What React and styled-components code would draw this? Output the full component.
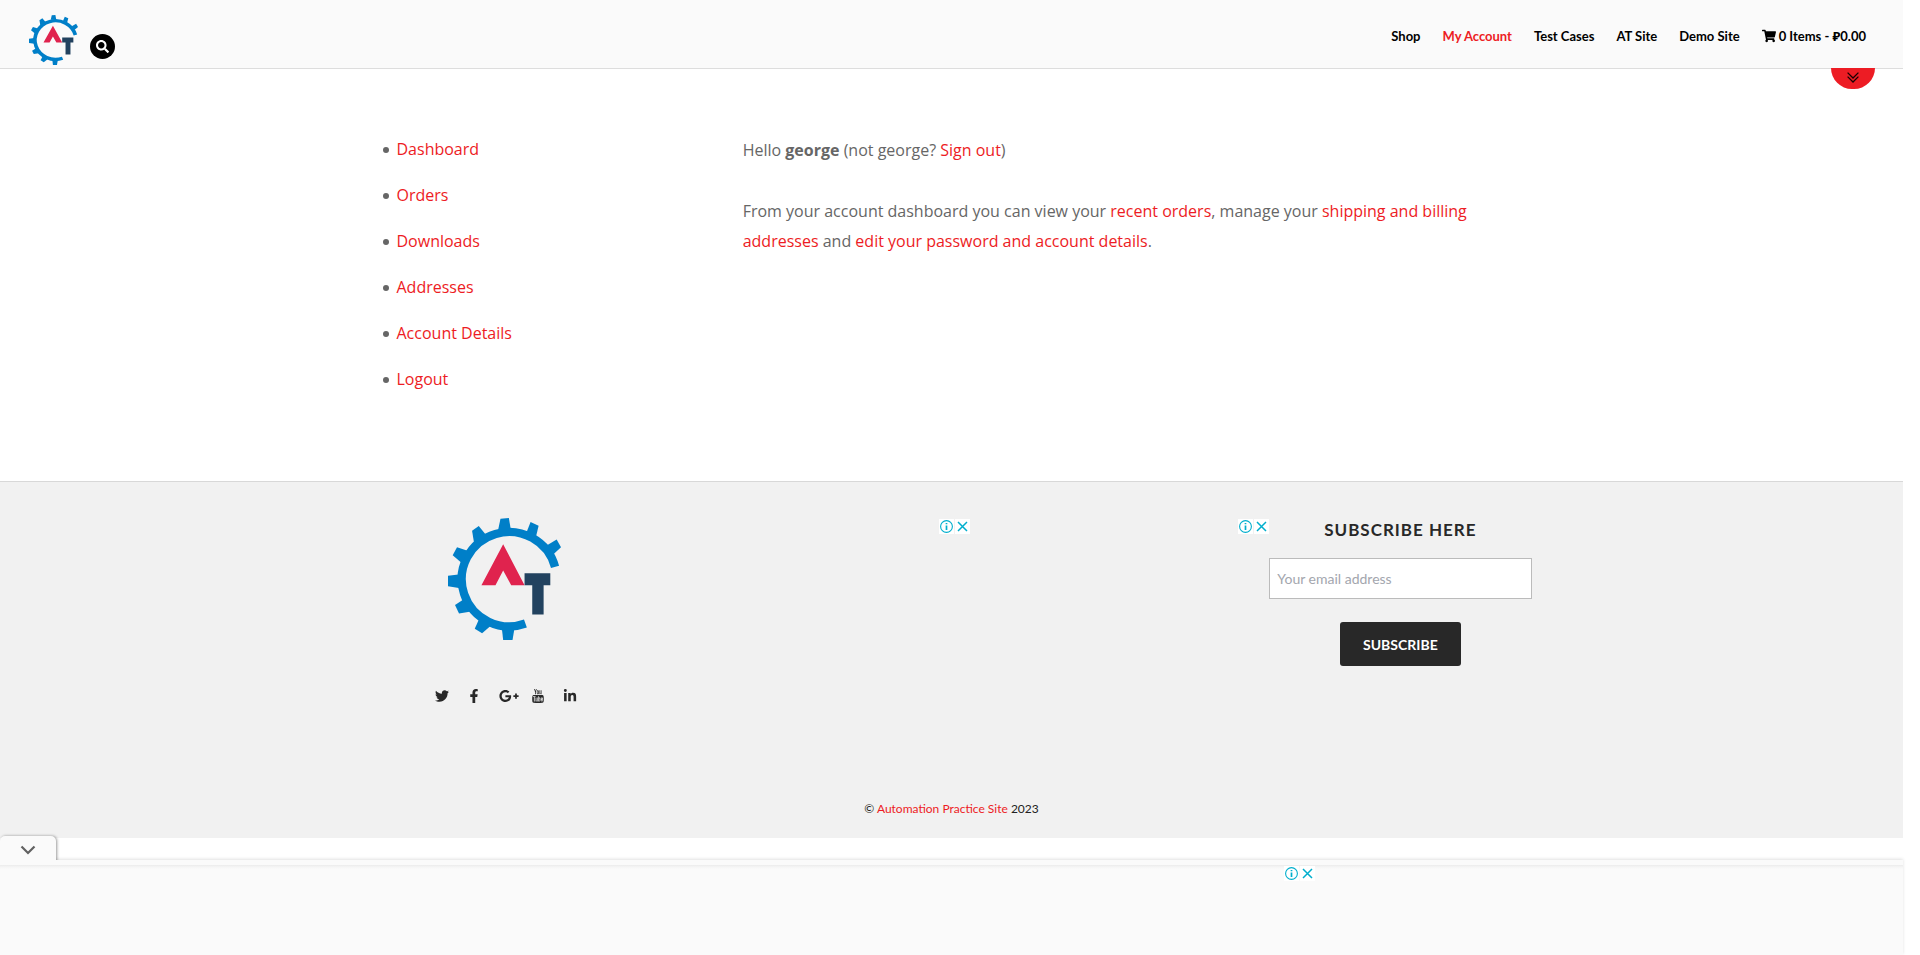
import React from "react";
import styled, { createGlobalStyle } from "styled-components";
import { FaSearch, FaShoppingCart, FaTwitter, FaFacebookF, FaGooglePlusG, FaLinkedinIn } from "react-icons/fa";
import { TfiYoutube } from "react-icons/tfi";

const RED = "#ed1c24";
const INK = "#282828";
const UI_FONT = 'Lato, "Noto Sans", sans-serif';
const BODY_FONT = '"Open Sans", "Noto Sans", sans-serif';

const GlobalStyle = createGlobalStyle`
  *, *::before, *::after { box-sizing: border-box; }
  body { margin: 0; background: #fff; color: #666; font: 16px/30px ${BODY_FONT}; }
  a { color: ${RED}; text-decoration: none; }
  p, ul, h4 { margin: 0; padding: 0; }
`;

const Page = styled.div`
  display: flex;
  flex-direction: column;
  min-height: 100vh;
  padding-right: 17px;
`;

const Header = styled.header`
  position: relative;
  display: flex;
  justify-content: space-between;
  height: 69px;
  padding: 0 37px 0 29px;
  background: #fafafa;
  border-bottom: 1px solid #ddd;
`;

const Brand = styled.div`
  display: flex;
  align-items: flex-end;
  gap: 12px;
  height: 65px;
`;

const LogoSvg = styled.svg`
  display: block;
  width: ${(p) => p.$width}px;
  height: ${(p) => p.$height}px;
`;

const SearchButton = styled.button`
  display: grid;
  place-items: center;
  width: 25px;
  height: 25px;
  margin-bottom: 6px;
  padding: 0;
  border: 0;
  border-radius: 50%;
  background: #000;
  color: #fff;
  font-size: 13px;
`;

const MainNav = styled.nav`
  display: flex;
  align-items: center;
  gap: 22px;
  height: 72px;
  font: bold 13px/20px ${UI_FONT};
`;

const NavLink = styled.a`
  display: flex;
  align-items: center;
  gap: 3px;
  color: ${(p) => (p.$active ? RED : "#000")};
`;

const DrawerToggle = styled.button`
  position: absolute;
  top: 68px;
  right: 28px;
  display: grid;
  justify-items: center;
  width: 44px;
  height: 21px;
  padding: 4px 0 0;
  border: 0;
  border-radius: 0 0 22px 22px;
  background: ${RED};
`;

const Container = styled.div`
  width: 100%;
  max-width: 1160px;
  margin: 0 auto;
`;

const Account = styled(Container).attrs({ as: "main" })`
  display: grid;
  grid-template-columns: 32% 68%;
  padding: 66px 0 88px;
`;

const AccountMenu = styled.ul`
  display: grid;
  align-content: start;
  gap: 18px;
  padding-left: 11px;
  line-height: 28px;
  list-style: none;
`;

const MenuItem = styled.li`
  display: flex;
  align-items: center;
  gap: 8px;
  &::before {
    content: "";
    width: 6px;
    height: 6px;
    margin-top: 2px;
    border-radius: 50%;
    background: #666;
  }
`;

const Intro = styled.div`
  display: grid;
  align-content: start;
  gap: 31px;
`;

const Footer = styled.footer`
  padding-top: 36px;
  background: #f1f1f1;
  border-top: 1px solid #d8d8d8;
`;

const Columns = styled(Container)`
  display: grid;
  grid-template-columns: repeat(4, 1fr);
  column-gap: 37px;
  min-height: 279px;
`;

const LogoColumn = styled.div`
  display: grid;
  align-content: start;
  justify-items: center;
  gap: 48px;
  padding-left: 4px;
`;

const Socials = styled.div`
  display: flex;
  gap: 18px;
  margin-left: 2px;
`;

const SocialLink = styled.a`
  display: flex;
  justify-content: ${(p) => (p.$wide ? "flex-start" : "center")};
  align-items: center;
  width: 14px;
  height: 15px;
  color: ${INK};
  font-size: ${(p) => (p.$wide ? 20 : 14)}px;
  svg { flex: none; }
`;

const AdColumn = styled.div`
  display: flex;
  justify-content: flex-end;
  margin-right: -37px;
  padding-top: 1px;
`;

const AdBadges = styled.div`
  display: flex;
  gap: 1px;
`;

const AdButton = styled.button`
  width: 15px;
  height: 15px;
  padding: 0;
  border: 0;
  background: #fff;
  svg { display: block; }
`;

const SubscribeForm = styled.form`
  display: flex;
  flex-direction: column;
  align-items: center;
  font-family: ${UI_FONT};
`;

const FormTitle = styled.h4`
  margin-bottom: 16px;
  color: ${INK};
  font: bold 17px/24px ${UI_FONT};
  letter-spacing: 1px;
`;

const EmailInput = styled.input`
  width: 100%;
  height: 41px;
  padding: 0 7px;
  border: 1px solid #bbb;
  background: #fff;
  font: 14px ${UI_FONT};
  &::placeholder { color: #a3a6ae; opacity: 1; }
`;

const SubmitButton = styled.button`
  height: 44px;
  margin-top: 23px;
  padding: 0 23px;
  border: 0;
  border-radius: 3px;
  background: ${INK};
  color: #fff;
  font: bold 14px ${UI_FONT};
`;

const Copyright = styled.p`
  padding-bottom: 17px;
  color: #222;
  font: 12px/24px ${UI_FONT};
  text-align: center;
`;

const AdPanel = styled.aside`
  position: relative;
  display: flex;
  justify-content: center;
  flex: 1 0 95px;
  margin-top: 22px;
  padding: 6px 0 0 695px;
  background: linear-gradient(#fafafa 5px, #ebebeb 5px, #f5f5f5 7px, #fafafa 9px);
  box-shadow: 0 -1px 3px rgba(0, 0, 0, 0.12);
`;

const PanelTab = styled.button`
  position: absolute;
  top: -24px;
  left: 0;
  display: grid;
  place-items: center;
  width: 56px;
  height: 28px;
  padding: 0;
  border: 0;
  border-radius: 5px 5px 0 0;
  background: #fafafa;
  box-shadow: 1px 0 3px rgba(0, 0, 0, 0.4);
  clip-path: inset(-4px -6px 4px 0);
`;

function Logo({ width, height }) {
  return (
    <LogoSvg $width={width} $height={height} viewBox="85 143 338 367" preserveAspectRatio="none" role="img" aria-label="Automation Practice Site">
      <path d="M316.6 460.4A142 142 0 1 1 405.2 290.2" fill="none" stroke="#007fc8" strokeWidth="25" />
      <g fill="#007fc8">
        <path d="M242 145 267 143 273 178 235 178Z" />
        <path d="M332 155 356 166 348 200 320 186Z" />
        <path d="M410 208 423 231 398 254 380 226Z" />
        <path d="M177 167 157 181 163 218 202 198Z" />
        <path d="M112 231 99 255 126 278 146 242Z" />
        <path d="M85 317 85 348 122 354 122 312Z" />
        <path d="M106 405 118 430 154 424 131 388Z" />
        <path d="M165 476 187 490 213 467 178 447Z" />
        <path d="M250 510 278 510 284 474 246 474Z" />
      </g>
      <path d="M250 222 314 345H274L250 301 227 345H185Z" fill="#e0234e" />
      <path d="M314 309H391V345H371V433H337V345H314Z" fill="#22425f" />
    </LogoSvg>
  );
}

function AdControls() {
  return (
    <AdBadges>
      <AdButton type="button" aria-label="Ad information">
        <svg width="15" height="15" viewBox="0 0 15 15" fill="none" stroke="#00aecd">
          <circle cx="7.5" cy="7.5" r="5.9" strokeWidth="1.1" />
          <path d="M7.5 6.4V11M7.5 3.9V5.3" strokeWidth="1.7" />
        </svg>
      </AdButton>
      <AdButton type="button" aria-label="Close ad">
        <svg width="15" height="15" viewBox="0 0 15 15" fill="none" stroke="#00aecd" strokeWidth="1.5">
          <path d="M3 3 12 12M12 3 3 12" />
        </svg>
      </AdButton>
    </AdBadges>
  );
}

const navItems = ["Shop", "My Account", "Test Cases", "AT Site", "Demo Site"];
const accountItems = ["Dashboard", "Orders", "Downloads", "Addresses", "Account Details", "Logout"];

export default function App() {
  return (
    <>
      <GlobalStyle />
      <Page>
        <Header>
          <Brand>
            <a href="#home"><Logo width={49} height={50} /></a>
            <SearchButton type="button" aria-label="Search"><FaSearch /></SearchButton>
          </Brand>
          <MainNav>
            {navItems.map((item) => (
              <NavLink key={item} href="#nav" $active={item === "My Account"}>{item}</NavLink>
            ))}
            <NavLink href="#cart"><FaShoppingCart size={14} />0 Items - ₽0.00</NavLink>
          </MainNav>
          <DrawerToggle type="button" aria-label="Open panel">
            <svg width="12" height="11" viewBox="0 0 12 11" fill="none" stroke="#1a0000" strokeWidth="1.3">
              <path d="M.6 .6 6 6 11.4 .6M.6 4.6 6 10 11.4 4.6" />
            </svg>
          </DrawerToggle>
        </Header>

        <Account>
          <nav>
            <AccountMenu>
              {accountItems.map((item) => (
                <MenuItem key={item}><a href="#account">{item}</a></MenuItem>
              ))}
            </AccountMenu>
          </nav>
          <Intro>
            <p>Hello <strong>george</strong> (not george? <a href="#signout">Sign out</a>)</p>
            <p>
              From your account dashboard you can view your <a href="#orders">recent orders</a>, manage your{" "}
              <a href="#addresses">shipping and billing addresses</a> and{" "}
              <a href="#details">edit your password and account details</a>.
            </p>
          </Intro>
        </Account>

        <Footer>
          <Columns>
            <LogoColumn>
              <Logo width={113} height={122} />
              <Socials>
                <SocialLink href="#twitter" aria-label="Twitter"><FaTwitter /></SocialLink>
                <SocialLink href="#facebook" aria-label="Facebook"><FaFacebookF /></SocialLink>
                <SocialLink href="#google" aria-label="Google Plus" $wide><FaGooglePlusG /></SocialLink>
                <SocialLink href="#youtube" aria-label="YouTube"><TfiYoutube /></SocialLink>
                <SocialLink href="#linkedin" aria-label="LinkedIn"><FaLinkedinIn /></SocialLink>
              </Socials>
            </LogoColumn>
            <AdColumn><AdControls /></AdColumn>
            <AdColumn><AdControls /></AdColumn>
            <SubscribeForm>
              <FormTitle>SUBSCRIBE HERE</FormTitle>
              <EmailInput type="email" aria-label="Email address" placeholder="Your email address" />
              <SubmitButton type="submit">SUBSCRIBE</SubmitButton>
            </SubscribeForm>
          </Columns>
          <Copyright>© <a href="#site">Automation Practice Site</a> 2023</Copyright>
        </Footer>

        <AdPanel>
          <PanelTab type="button" aria-label="Collapse ad">
            <svg width="16" height="10" viewBox="0 0 16 10" fill="none" stroke="#616161" strokeWidth="2.2">
              <path d="M1.5 1.5 8 8 14.5 1.5" />
            </svg>
          </PanelTab>
          <AdControls />
        </AdPanel>
      </Page>
    </>
  );
}
